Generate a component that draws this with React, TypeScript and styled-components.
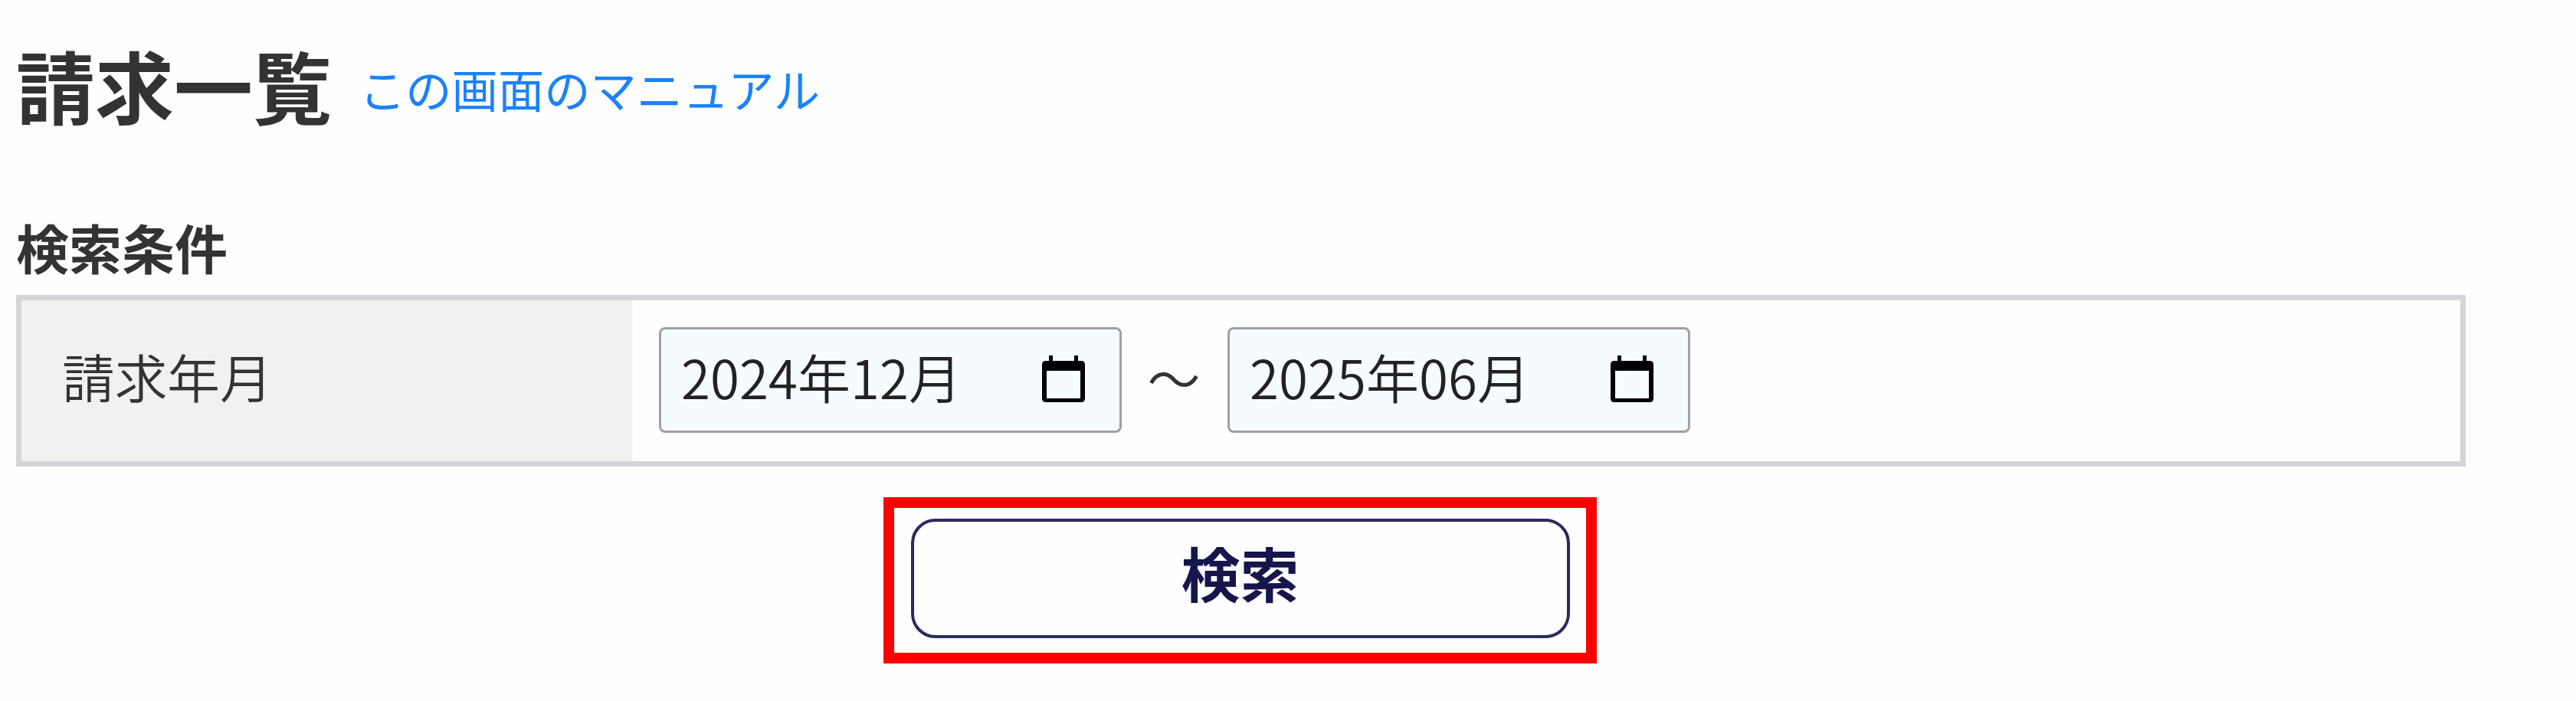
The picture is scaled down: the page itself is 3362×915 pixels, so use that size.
import React from "react";
import styled, { createGlobalStyle } from "styled-components";

interface IFrame {
  color: string;
}

const GlobalStyle = createGlobalStyle`
  * {
    box-sizing: border-box;
  }

  body {
    margin: 0;
    background: #fefefe;
    color: #333;
    font-family: "Noto Sans CJK JP", "Liberation Sans", sans-serif;
  }
`;

const Page = styled.main`
  width: 3218px;
  min-height: 915px;
  padding: 51px 0 0 21px;
`;

const Header = styled.header`
  display: flex;
  align-items: center;
  gap: 36px;
  height: 120px;
`;

const Title = styled.h1`
  margin: 0;
  font-size: 103px;
  font-weight: 700;
  line-height: 120px;
`;

const ManualLink = styled.a`
  margin-top: 8px;
  color: #1a82fb;
  font-size: 60.3px;
  font-weight: 400;
  line-height: 80px;
  text-decoration: none;
`;

const SectionTitle = styled.h2`
  margin: 106px 0 0;
  font-size: 69px;
  font-weight: 700;
  line-height: 90px;
`;

const Conditions = styled.div`
  display: flex;
  height: 224px;
  margin-top: 18px;
  border: 7px solid #d5d5d9;
`;

const Label = styled.div`
  display: flex;
  align-items: center;
  width: 797px;
  padding: 0 0 14px 53px;
  background: #f1f1f1;
  font-size: 68.7px;
  font-weight: 350;
`;

const Fields = styled.div`
  display: flex;
  align-items: center;
  padding: 0 0 3px 35px;
  font-size: 69px;
  font-weight: 350;
`;

const MonthField = styled.div`
  display: flex;
  align-items: center;
  justify-content: space-between;
  width: 604px;
  height: 138px;
  padding: 0 45px 9px 26px;
  border: 3px solid #a0a0a2;
  border-radius: 8px;
  background: #f6fbff;
  color: #222;
  letter-spacing: 0.1px;
  line-height: 1;

  svg {
    width: 56px;
    height: 62px;
    margin-top: 7px;
  }
`;

const Separator = styled.span`
  width: 138px;
  padding: 0 2px 8px 0;
  text-align: center;
`;

const Actions = styled.div`
  display: flex;
  justify-content: center;
  margin-top: 40px;
  padding-right: 3px;
`;

const Frame = styled.div<IFrame>`
  width: 931px;
  height: 217px;
  padding: 14px 21px 19px 22px;
  border: 14px solid ${({ color }) => color};
`;

const SearchButton = styled.button`
  display: block;
  width: 100%;
  height: 156px;
  padding: 0 0 18px;
  border: 4px solid #2b2b60;
  border-radius: 32px;
  background: #fefefe;
  color: #16164d;
  font-family: inherit;
  font-size: 77px;
  font-weight: 700;
  line-height: 1;
`;

const CalendarIcon = () => (
  <svg viewBox="0 0 56 62" fill="#000">
    <path d="M5 7h4V0h5v7h28V0h5v7h4q5 0 5 5v44q0 5-5 5H5q-5 0-5-5V12q0-5 5-5zm1 13v36h44V20z" />
  </svg>
);

const Month = ({ children }: { children: React.ReactNode }) => (
  <MonthField>
    <span>{children}</span>
    <CalendarIcon />
  </MonthField>
);

export default function App() {
  return (
    <>
      <GlobalStyle />
      <Page>
        <Header>
          <Title>請求一覧</Title>
          <ManualLink href="#">この画面のマニュアル</ManualLink>
        </Header>
        <SectionTitle>検索条件</SectionTitle>
        <Conditions>
          <Label>請求年月</Label>
          <Fields>
            <Month>2024年12月</Month>
            <Separator>～</Separator>
            <Month>2025年06月</Month>
          </Fields>
        </Conditions>
        <Actions>
          <Frame color="#ff0000">
            <SearchButton type="button">検索</SearchButton>
          </Frame>
        </Actions>
      </Page>
    </>
  );
}
